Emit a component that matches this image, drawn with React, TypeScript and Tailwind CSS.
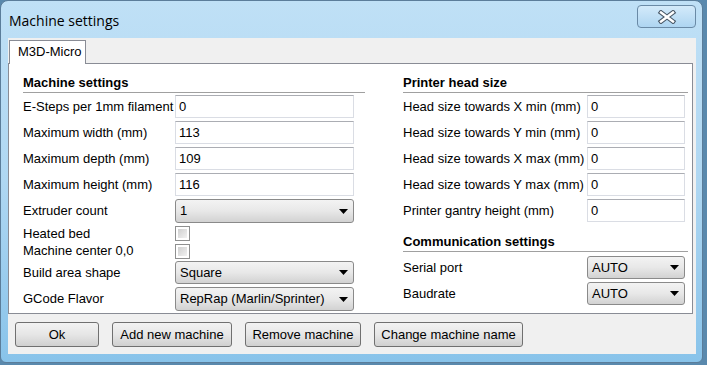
import React from "react";

const font = { fontFamily: '"Liberation Sans", Arial, sans-serif' };

const TextBox = ({ value, w }: { value: string; w: string }) => (
  <div
    className={`${w} h-[23px] flex items-center pl-[3px] bg-white border border-[#dadde4] border-t-[#abadb3] text-[13px] text-black`}
  >
    {value}
  </div>
);

const Combo = ({ value, w, h = "h-[23px]" }: { value: string; w: string; h?: string }) => (
  <div
    className={`${w} ${h} flex items-center justify-between pl-[4px] pr-[5px] rounded-[3px] border border-[#8a8a8a] bg-gradient-to-b from-[#f3f3f3] via-[#e8e8e8] to-[#d2d2d2] text-[13px] text-black`}
  >
    <span>{value}</span>
    <svg width="9" height="5" viewBox="0 0 9 5">
      <path d="M0 0 H9 L4.5 5 Z" fill="#000" />
    </svg>
  </div>
);

const CheckBox = () => (
  <div className="w-[15px] h-[15px] border border-[#8e8f8f] bg-white p-[2px]">
    <div className="w-full h-full bg-gradient-to-br from-[#cfcfcf] to-[#f2f2f2]" />
  </div>
);

const Header = ({ children, className = "" }: { children: React.ReactNode; className?: string }) => (
  <div className={`h-[20px] border-b border-[#a0a0a0] font-bold text-[13px] leading-[19px] text-black ${className}`}>
    {children}
  </div>
);

const Row = ({
  label,
  lw,
  className = "",
  children,
}: {
  label: string;
  lw: string;
  className?: string;
  children: React.ReactNode;
}) => (
  <div className={`flex items-center ${className}`}>
    <div className={`${lw} text-[13px] text-black whitespace-nowrap`}>{label}</div>
    {children}
  </div>
);

const Btn = ({ children, w }: { children: React.ReactNode; w: string }) => (
  <div
    className={`${w} h-[25px] flex items-center justify-center rounded-[3px] border border-[#707070] bg-gradient-to-b from-[#f2f2f2] via-[#e6e6e6] to-[#d0d0d0] text-[13px] text-black`}
  >
    {children}
  </div>
);

export default function App() {
  return (
    <div className="w-[707px] h-[365px] bg-[#5a89ad] overflow-hidden" style={font}>
      <div className="relative w-[703px] h-[363px] rounded-t-[8px] rounded-b-[6px] border border-[#5b7d9a] bg-gradient-to-b from-[#bfe0f6] via-[#afd7f2] to-[#88c3ea] pt-[37px] pl-[7px] pr-[6px] pb-[8px] flex flex-col">
        <div
          className="absolute left-[8px] top-[10px] text-[14px] leading-[20px] text-black"
          style={{ fontFamily: '"Open Sans", "Noto Sans", sans-serif' }}
        >
          Machine settings
        </div>
        <div className="absolute top-[4px] right-[6px] w-[59px] h-[23px] rounded-[4px] border border-[#6a8aa6] bg-gradient-to-b from-[#d3eafa] to-[#aed5f1] flex items-center justify-center">
          <svg width="20" height="14" viewBox="0 0 20 14">
            <path d="M4 2.5 L16 11.5 M16 2.5 L4 11.5" stroke="#485766" strokeWidth="4.6" strokeLinecap="square" />
            <path d="M4 2.5 L16 11.5 M16 2.5 L4 11.5" stroke="#ffffff" strokeWidth="2.4" strokeLinecap="square" />
          </svg>
        </div>

        <div className="flex-1 bg-[#f0f0f0] flex flex-col">
          <div className="pt-[2px] pl-[1px] flex">
            <div className="relative z-10 -mb-px w-[77px] h-[24px] bg-white border border-b-0 border-[#898c95] pl-[8px] text-[13px] leading-[22px] text-black">
              M3D-Micro
            </div>
          </div>

          <div className="w-[685px] h-[251px] bg-white border border-[#898c95] pt-[9px] pl-[14px] flex gap-[38px]">
            <div className="w-[342px] flex flex-col">
              <Header>Machine settings</Header>
              <Row label="E-Steps per 1mm filament" lw="w-[152px]" className="mt-[2px]">
                <TextBox value="0" w="w-[179px]" />
              </Row>
              <Row label="Maximum width (mm)" lw="w-[152px]" className="mt-[3px]">
                <TextBox value="113" w="w-[179px]" />
              </Row>
              <Row label="Maximum depth (mm)" lw="w-[152px]" className="mt-[3px]">
                <TextBox value="109" w="w-[179px]" />
              </Row>
              <Row label="Maximum height (mm)" lw="w-[152px]" className="mt-[3px]">
                <TextBox value="116" w="w-[179px]" />
              </Row>
              <Row label="Extruder count" lw="w-[152px]" className="mt-[3px]">
                <Combo value="1" w="w-[179px]" h="h-[24px]" />
              </Row>
              <Row label="Heated bed" lw="w-[152px]" className="mt-[3px] h-[15px]">
                <CheckBox />
              </Row>
              <Row label="Machine center 0,0" lw="w-[152px]" className="mt-[2px] h-[16px]">
                <CheckBox />
              </Row>
              <Row label="Build area shape" lw="w-[152px]" className="mt-[2px]">
                <Combo value="Square" w="w-[179px]" />
              </Row>
              <Row label="GCode Flavor" lw="w-[152px]" className="mt-[3px]">
                <Combo value="RepRap (Marlin/Sprinter)" w="w-[179px]" h="h-[24px]" />
              </Row>
            </div>

            <div className="w-[285px] flex flex-col">
              <Header>Printer head size</Header>
              <Row label="Head size towards X min (mm)" lw="w-[184px]" className="mt-[2px]">
                <TextBox value="0" w="w-[98px]" />
              </Row>
              <Row label="Head size towards Y min (mm)" lw="w-[184px]" className="mt-[3px]">
                <TextBox value="0" w="w-[98px]" />
              </Row>
              <Row label="Head size towards X max (mm)" lw="w-[184px]" className="mt-[3px]">
                <TextBox value="0" w="w-[98px]" />
              </Row>
              <Row label="Head size towards Y max (mm)" lw="w-[184px]" className="mt-[3px]">
                <TextBox value="0" w="w-[98px]" />
              </Row>
              <Row label="Printer gantry height (mm)" lw="w-[184px]" className="mt-[3px]">
                <TextBox value="0" w="w-[98px]" />
              </Row>
              <Header className="mt-[10px]">Communication settings</Header>
              <Row label="Serial port" lw="w-[184px]" className="mt-[4px]">
                <Combo value="AUTO" w="w-[98px]" />
              </Row>
              <Row label="Baudrate" lw="w-[184px]" className="mt-[3px]">
                <Combo value="AUTO" w="w-[98px]" />
              </Row>
            </div>
          </div>

          <div className="mt-[8px] pl-[7px] flex gap-[13px]">
            <Btn w="w-[84px]">Ok</Btn>
            <Btn w="w-[120px]">Add new machine</Btn>
            <Btn w="w-[116px]">Remove machine</Btn>
            <Btn w="w-[149px]">Change machine name</Btn>
          </div>
        </div>
      </div>
    </div>
  );
}
